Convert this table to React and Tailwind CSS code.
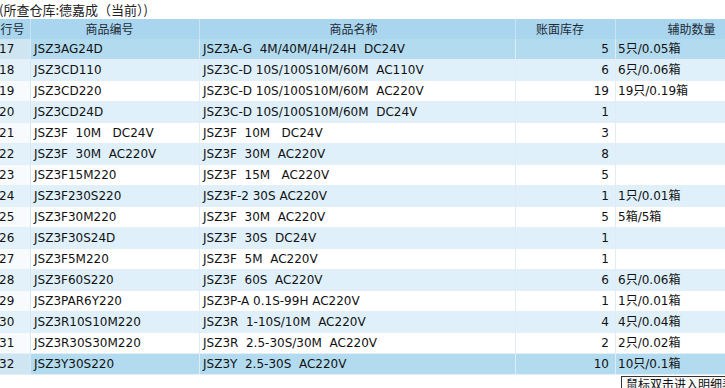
import React from "react";

const rows = [
  ["17", "JSZ3AG24D", "JSZ3A-G  4M/40M/4H/24H  DC24V", "5", "5只/0.05箱"],
  ["18", "JSZ3CD110", "JSZ3C-D 10S/100S10M/60M  AC110V", "6", "6只/0.06箱"],
  ["19", "JSZ3CD220", "JSZ3C-D 10S/100S10M/60M  AC220V", "19", "19只/0.19箱"],
  ["20", "JSZ3CD24D", "JSZ3C-D 10S/100S10M/60M  DC24V", "1", ""],
  ["21", "JSZ3F  10M   DC24V", "JSZ3F  10M   DC24V", "3", ""],
  ["22", "JSZ3F  30M  AC220V", "JSZ3F  30M  AC220V", "8", ""],
  ["23", "JSZ3F15M220", "JSZ3F  15M   AC220V", "5", ""],
  ["24", "JSZ3F230S220", "JSZ3F-2 30S AC220V", "1", "1只/0.01箱"],
  ["25", "JSZ3F30M220", "JSZ3F  30M  AC220V", "5", "5箱/5箱"],
  ["26", "JSZ3F30S24D", "JSZ3F  30S  DC24V", "1", ""],
  ["27", "JSZ3F5M220", "JSZ3F  5M  AC220V", "1", ""],
  ["28", "JSZ3F60S220", "JSZ3F  60S  AC220V", "6", "6只/0.06箱"],
  ["29", "JSZ3PAR6Y220", "JSZ3P-A 0.1S-99H AC220V", "1", "1只/0.01箱"],
  ["30", "JSZ3R10S10M220", "JSZ3R  1-10S/10M  AC220V", "4", "4只/0.04箱"],
  ["31", "JSZ3R30S30M220", "JSZ3R  2.5-30S/30M  AC220V", "2", "2只/0.02箱"],
  ["32", "JSZ3Y30S220", "JSZ3Y  2.5-30S  AC220V", "10", "10只/0.1箱"],
];

// the current row and the hovered row share the darker blue
const selected = ["17", "32"];

const Row = ({ row, index }) => {
  const isSel = selected.includes(row[0]);
  const bg = isSel ? "bg-[#b3dbf0]" : index % 2 === 1 ? "bg-[#dff0fb]" : "bg-white";
  const numBg = isSel ? "bg-[#cfe5f2]" : index % 2 === 1 ? "bg-[#e3f1fa]" : "bg-[#f7fbfe]";
  return (
    <div className={`flex h-[21px] items-center border-b border-[#e4eef6] ${bg}`}>
      <div className={`w-[36px] h-full flex items-center pl-[4px] border-r border-[#d6e6f2] ${numBg}`}>
        {row[0]}
      </div>
      <div className="w-[169px] h-full flex items-center pl-[3px] border-r border-[#e0ecf5] whitespace-pre">
        {row[1]}
      </div>
      <div className="w-[316px] h-full flex items-center pl-[3px] border-r border-[#e0ecf5] whitespace-pre">
        {row[2]}
      </div>
      <div className="w-[100px] h-full flex items-center justify-end pr-[6px] border-r border-[#e0ecf5]">
        {row[3]}
      </div>
      <div className="w-[162px] h-full flex items-center pl-[2px] whitespace-pre">
        {row[4]}
      </div>
    </div>
  );
};

const App = () => {
  return (
    <div
      className="relative w-[725px] h-[388px] overflow-hidden bg-white text-[12px] text-[#111]"
      style={{ fontFamily: '"DejaVu Sans", "Noto Sans CJK SC", sans-serif' }}
    >
      {/* title */}
      <div className="h-[19px] flex items-center ml-[-1px] text-[13px] text-[#222]" style={{ fontFamily: '"Noto Sans CJK SC", sans-serif' }}>
        (所查仓库:德嘉成（当前）)
      </div>
      <div className="ml-[-5px] w-[783px]">
        {/* header */}
        <div className="flex h-[20px] items-center bg-[#a9d5ef] text-[#1d2a35]" style={{ fontFamily: '"Noto Sans CJK SC", sans-serif' }}>
          <div className="w-[36px] h-full flex items-center justify-center border-r border-[#c7e3f5]">行号</div>
          <div className="w-[169px] h-full flex items-center justify-center pr-[11px] border-r border-[#c7e3f5]">商品编号</div>
          <div className="w-[316px] h-full flex items-center justify-center pr-[8px] border-r border-[#c7e3f5]">商品名称</div>
          <div className="w-[100px] h-full flex items-center justify-center pr-[11px] border-r border-[#c7e3f5]">账面库存</div>
          <div className="w-[162px] h-full flex items-center justify-center pr-[11px]">辅助数量</div>
        </div>
        {rows.map((row, i) => (
          <Row key={row[0]} row={row} index={i} />
        ))}
      </div>
      {/* tooltip */}
      <div
        className="absolute left-[621px] top-[376px] h-[16px] px-[4px] bg-[#fafafa] border border-[#333] text-[12px] leading-[14px] whitespace-nowrap"
        style={{ fontFamily: '"Noto Sans CJK SC", sans-serif' }}
      >
        鼠标双击进入明细表
      </div>
    </div>
  );
};

export default App;
